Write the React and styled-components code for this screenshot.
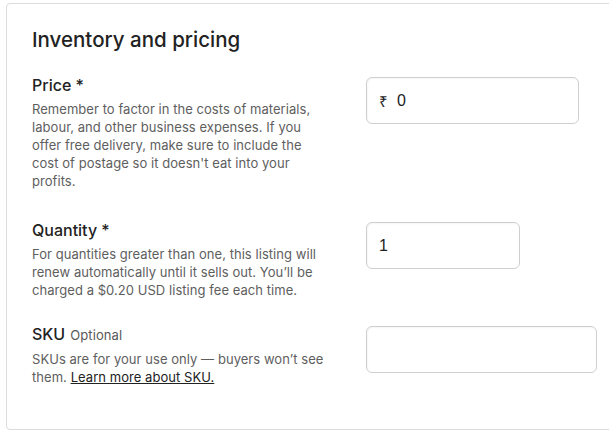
import React from 'react';
import styled, { createGlobalStyle } from 'styled-components';

const GlobalStyle = createGlobalStyle`
  html, body {
    margin: 0;
    padding: 0;
    background: #fff;
    overflow: hidden;
  }
  body {
    font-family: Inter, "Liberation Sans", sans-serif;
    color: #222;
  }
`;

const Page = styled.div`
  padding: 3px 0 0 6px;
  width: 609px;
  height: 431px;
  box-sizing: border-box;
  overflow: hidden;
`;

const Card = styled.section`
  width: 640px;
  height: 427px;
  box-sizing: border-box;
  border: 1px solid #dcdcdc;
  border-radius: 4px;
  padding: 22px 0 0 25px;
`;

const Heading = styled.h2`
  margin: 0 0 19px;
  font-size: 20.5px;
  line-height: 28px;
  font-weight: 500;
  color: #222;
`;

const Row = styled.div`
  display: flex;
  align-items: flex-start;
  margin-top: ${(p) => p.$top || 0}px;
`;

const Info = styled.div`
  width: 296px;
  margin-right: 38px;
`;

const Label = styled.div`
  font-size: 16px;
  line-height: 24px;
  font-weight: 500;
  color: #222;
  margin-bottom: 3px;
`;

const Optional = styled.span`
  font-size: 13px;
  font-weight: 400;
  color: #595959;
  margin-left: 5px;
  letter-spacing: 0.1px;
`;

const Help = styled.p`
  margin: 0;
  font-size: 13px;
  line-height: 18px;
  letter-spacing: 0.05px;
  color: #5e5e5e;
`;

const HelpLink = styled.a`
  color: #222;
  text-decoration: underline;
`;

const Field = styled.div`
  display: flex;
  align-items: center;
  margin-top: 4px;
  width: ${(p) => p.$width}px;
  height: 47px;
  box-sizing: border-box;
  border: 1px solid #cfcfcf;
  border-radius: 6px;
  padding: 0 12px;
  background: #fff;
  box-shadow: inset 1px 1px 2px rgba(0, 0, 0, 0.04);
  font-family: "Liberation Sans", Arial, sans-serif;
  font-size: 16px;
  color: #222;
`;

const Currency = styled.span`
  font-size: 15px;
  margin-right: 9px;
`;

const Value = styled.span`
  font-size: 16px;
`;

export default function App() {
  return (
    <>
      <GlobalStyle />
      <Page>
        <Card>
          <Heading>Inventory and pricing</Heading>

          <Row>
            <Info>
              <Label>Price *</Label>
              <Help>
                Remember to factor in the costs of materials, labour, and other
                business expenses. If you offer free delivery, make sure to
                include the cost of postage so it doesn't eat into your profits.
              </Help>
            </Info>
            <Field $width={213}>
              <Currency>₹</Currency>
              <Value>0</Value>
            </Field>
          </Row>

          <Row $top={28}>
            <Info>
              <Label>Quantity *</Label>
              <Help>
                For quantities greater than one, this listing will renew
                automatically until it sells out. You’ll be charged a $0.20 USD
                listing fee each time.
              </Help>
            </Info>
            <Field $width={154}>
              <Value>1</Value>
            </Field>
          </Row>

          <Row $top={23}>
            <Info>
              <Label>
                SKU<Optional>Optional</Optional>
              </Label>
              <Help>
                SKUs are for your use only — buyers won’t see them.{' '}
                <HelpLink href="#">Learn more about SKU.</HelpLink>
              </Help>
            </Info>
            <Field $width={231} />
          </Row>
        </Card>
      </Page>
    </>
  );
}
